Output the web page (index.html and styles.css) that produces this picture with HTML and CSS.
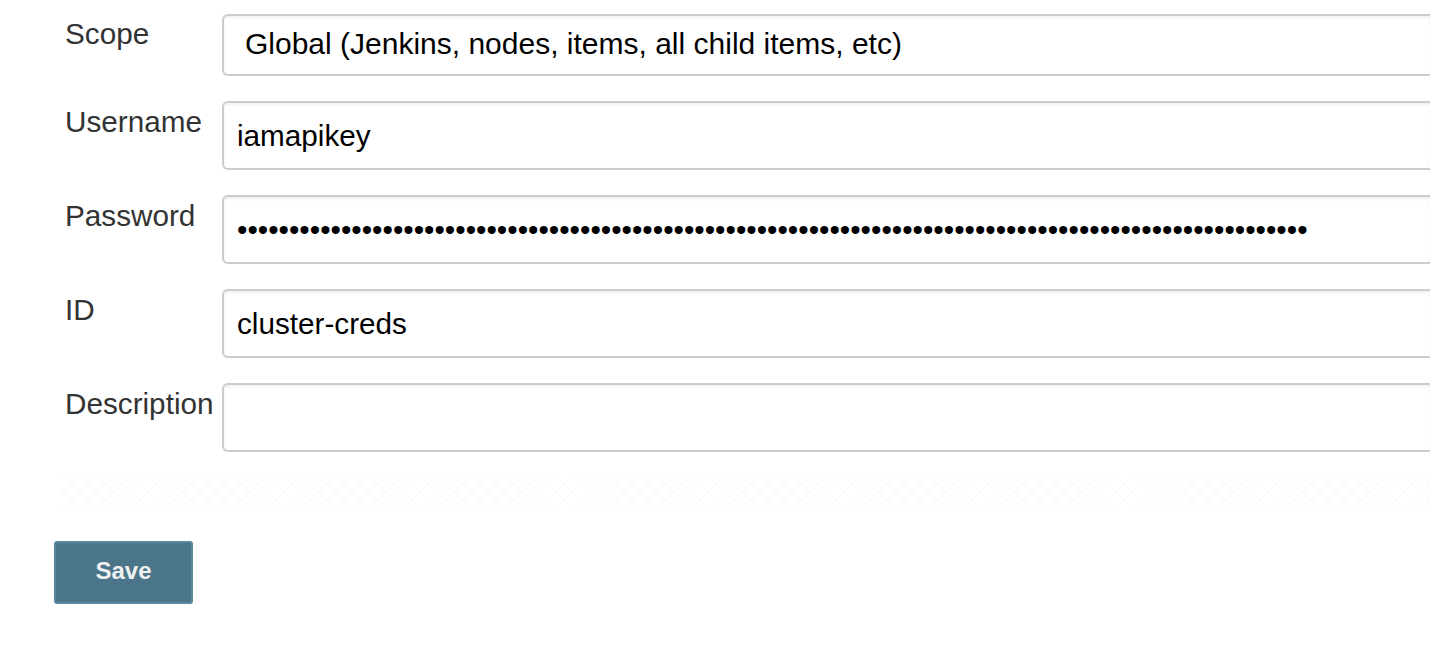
FILE: index.html
```html
<!DOCTYPE html>
<html>
<head>
<meta charset="utf-8">
<link rel="stylesheet" href="styles.css">
</head>
<body>
<form class="form">
  <div class="row row-scope">
    <label class="label">Scope</label>
    <div class="field select">Global (Jenkins, nodes, items, all child items, etc)</div>
  </div>
  <div class="row">
    <label class="label">Username</label>
    <input class="field input" type="text" value="iamapikey">
  </div>
  <div class="row">
    <label class="label">Password</label>
    <input class="field input password" type="password" value="cluster-creds-password-value-cluster-creds-password-value-cluster-creds-password-value-cluster-creds-pa">
  </div>
  <div class="row">
    <label class="label">ID</label>
    <input class="field input" type="text" value="cluster-creds">
  </div>
  <div class="row">
    <label class="label">Description</label>
    <input class="field input" type="text" value="">
  </div>
  <div class="separator"></div>
  <div class="actions">
    <button class="save" type="button">Save</button>
  </div>
</form>
</body>
</html>
```

FILE: styles.css
```css
html, body {
  margin: 0;
  padding: 0;
  background: #fff;
  overflow: hidden;
}
body {
  width: 1430px;
  height: 660px;
  font-family: "Liberation Sans", Arial, Helvetica, sans-serif;
}
.form {
  box-sizing: border-box;
  width: 1430px;
  padding: 14px 0 0 54px;
  display: flex;
  flex-direction: column;
  gap: 25px;
}
.row {
  display: grid;
  grid-template-columns: 168px 1fr;
  align-items: start;
}
.label {
  padding-left: 11px;
  padding-top: 4px;
  font-size: 29.7px;
  line-height: 34px;
  color: #333;
}
.field {
  box-sizing: border-box;
  height: 69px;
  width: 100%;
  border: 2px solid #ccc;
  border-right: none;
  border-radius: 6px 0 0 6px;
  box-shadow: inset 0 2px 3px rgba(0, 0, 0, 0.06);
  background: #fff;
  font-family: "Liberation Sans", Arial, Helvetica, sans-serif;
  font-size: 29.7px;
  color: #000;
  margin: 0;
  outline: none;
}
.select {
  height: 62px;
  display: flex;
  align-items: center;
  padding-left: 21px;
  padding-bottom: 2px;
  font-size: 30px;
}
.row-scope .label {
  padding-top: 3px;
}
.input {
  padding: 0 13px;
}
.password {
  letter-spacing: 0;
}
.separator {
  height: 30px;
  margin: 0 0 0 6px;
  background-image:
    repeating-linear-gradient(135deg, #fbfbfb 0 2px, transparent 2px 12px),
    repeating-linear-gradient(45deg, #fcfcfc 0 2px, transparent 2px 12px);
}
.actions {
  padding-top: 9px;
}
.save {
  box-sizing: border-box;
  width: 139px;
  height: 63px;
  background: #4b7589;
  border: 2px solid #5a88a0;
  border-radius: 3px;
  color: #eef0f1;
  font-family: "Liberation Sans", Arial, Helvetica, sans-serif;
  font-weight: bold;
  font-size: 24px;
  padding: 0 0 4px;
  cursor: pointer;
}
```
